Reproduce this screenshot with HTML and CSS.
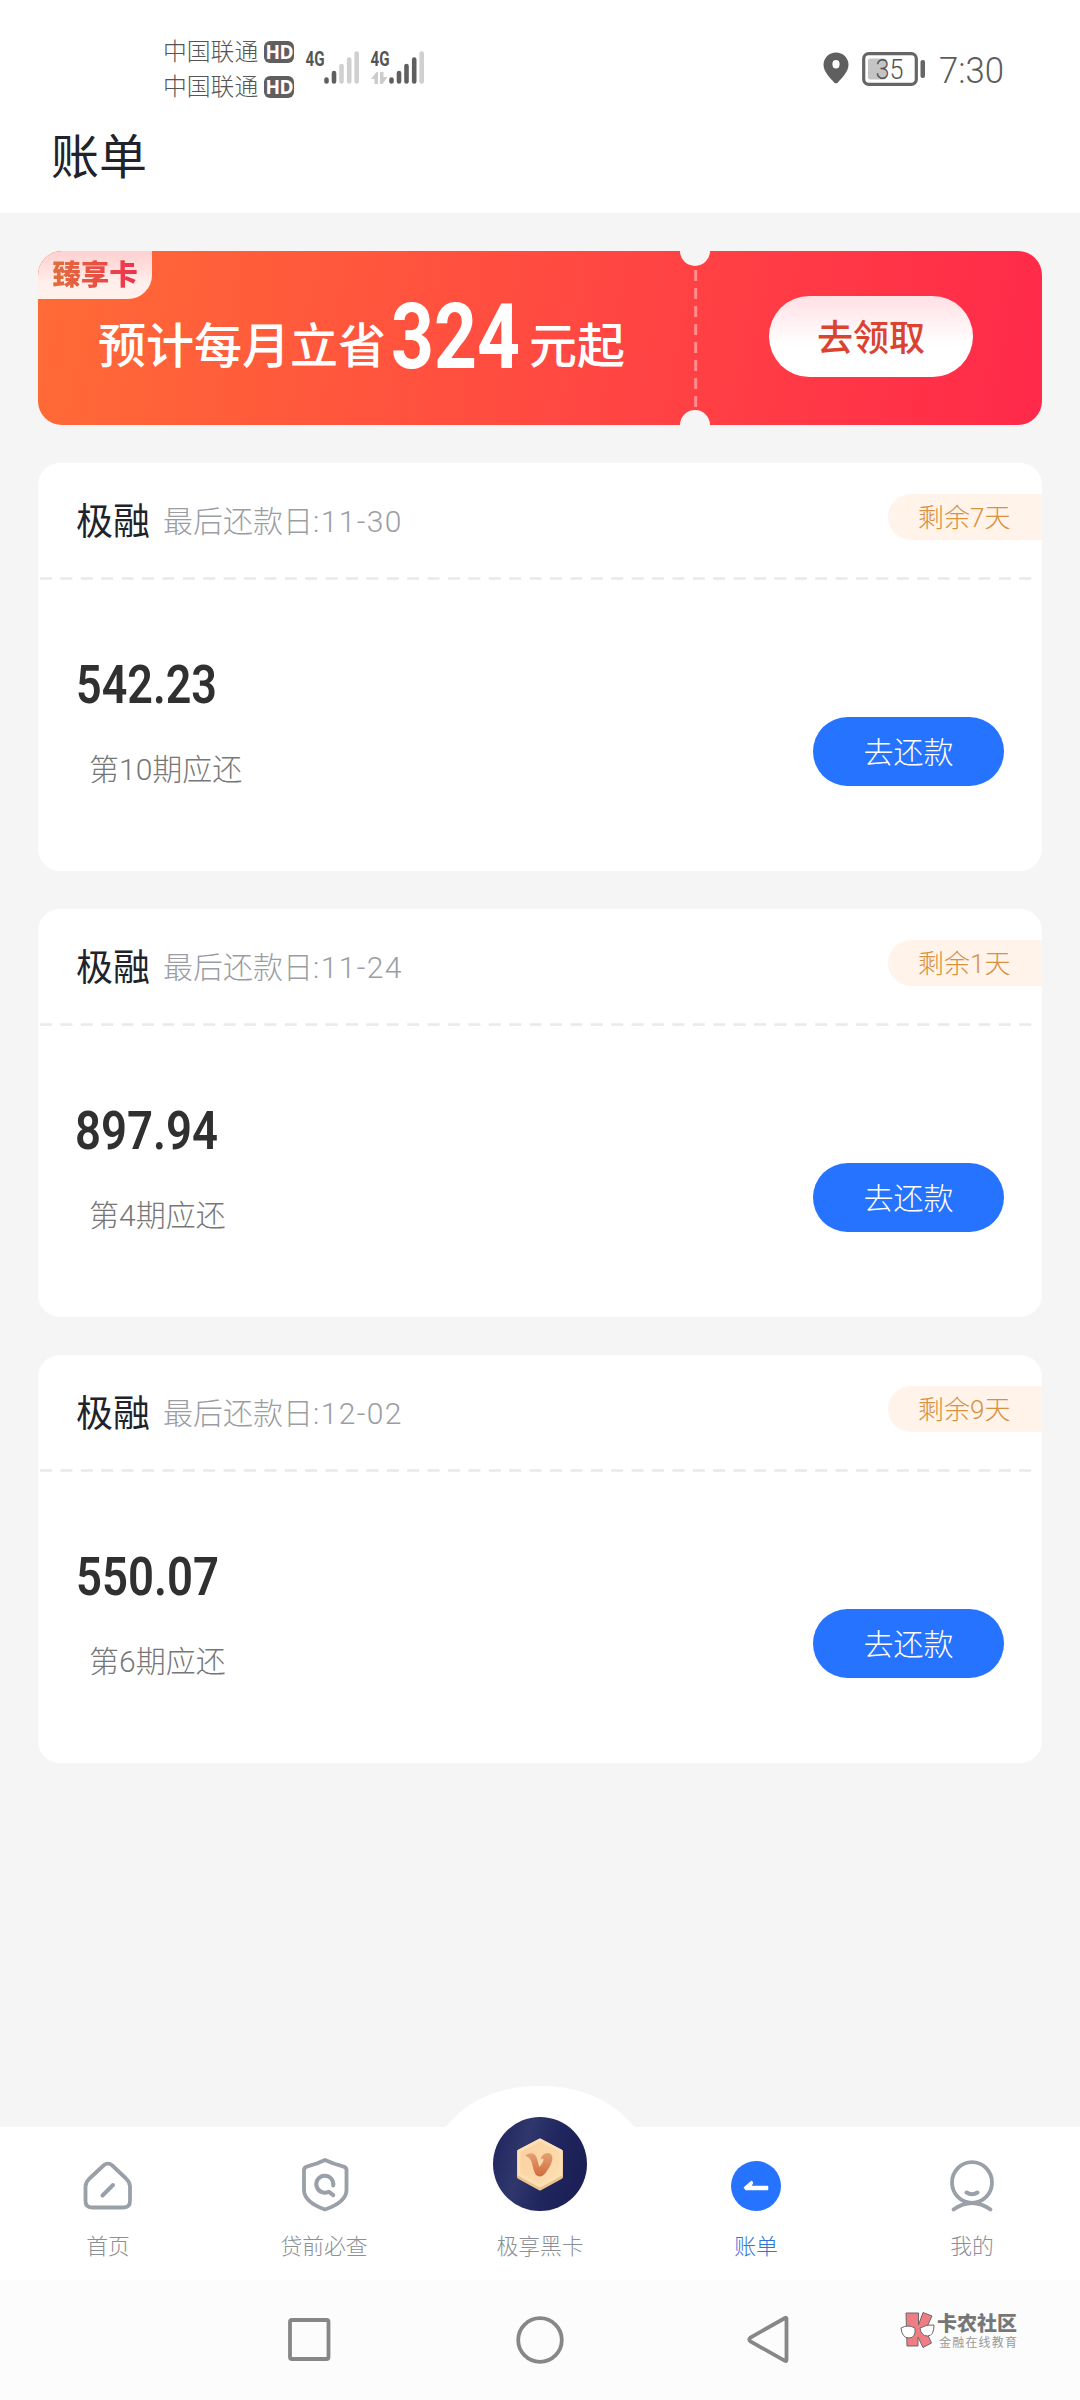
FILE: index.html
```html
<!DOCTYPE html>
<html lang="zh-CN">
<head>
<meta charset="utf-8">
<title>账单</title>
<link rel="stylesheet" href="styles.css">
</head>
<body>
<div class="screen">
  <header class="header">
    <div class="status">
      <div class="carriers">
        <div class="carrier"><span>中国联通</span><b class="hd">HD</b></div>
        <div class="carrier"><span>中国联通</span><b class="hd">HD</b></div>
      </div>
      <svg class="signals" width="120" height="40" viewBox="304 48 120 40">
        <g class="net-label"><text x="305.500" y="66" textLength="19" lengthAdjust="spacingAndGlyphs">4G</text><text x="370.500" y="66" textLength="19" lengthAdjust="spacingAndGlyphs">4G</text></g>
        <g class="bars">
          <path class="on" d="M326.500 79.500v2M334 73v8.500"/>
          <path class="off" d="M341.500 66v15.500M349.200 59.500v22M356.700 53.500v28"/>
          <path class="on" d="M391.500 79.500v2M399 73v8.500M406.500 66v15.500M414.200 59.500v22"/>
          <path class="off" d="M421.700 53.500v28"/>
        </g>
        <path fill="#ccc" d="M371 79l5.500-7h1.500v12h-3.500v-5zM380 72h3.500v5h4l-5 7H380z"/>
      </svg>
      <div class="status-right">
        <svg width="26" height="32" viewBox="0 0 26 32"><path fill="#5f5f5f" fill-rule="evenodd" d="M13 0.500C6 .500.500 6 .500 12.700c0 7 7 13.600 10.700 17.700q1.800 1.800 3.600 0C18.500 26.300 25.500 19.700 25.500 12.700 25.500 6 20 .500 13 .500zM13 8a3.600 4.200 0 1 0 0 8.400A3.600 4.200 0 1 0 13 8z"/></svg>
        <svg class="battery" width="64" height="34" viewBox="0 0 64 34"><rect x="1.700" y="1.700" width="52.600" height="30.600" rx="5" fill="none" stroke="#666" stroke-width="3.200"/><rect x="6" y="6.500" width="18" height="21" rx="2" fill="#c4c4c4"/><rect x="58.500" y="8" width="4.500" height="18" rx="2" fill="#666"/><text x="13.500" y="27" textLength="28" lengthAdjust="spacingAndGlyphs">35</text></svg>
        <svg class="clock" width="66" height="44" viewBox="0 0 66 44"><text x="0" y="31" textLength="65" lengthAdjust="spacingAndGlyphs">7:30</text></svg>
      </div>
    </div>
    <h1 class="title">账单</h1>
  </header>

  <main class="content">
    <section class="banner">
      <div class="banner-tag"><span>臻享卡</span></div>
      <div class="banner-main">
        <span>预计每月立省</span>
        <svg class="saving" width="130" height="112" viewBox="0 -20 130 112"><text x="0" y="67" textLength="129" lengthAdjust="spacingAndGlyphs">324</text></svg>
        <span>元起</span>
      </div>
      <svg class="perforation" width="30" height="174" viewBox="0 0 30 174"><circle cx="15" cy="0" r="15" fill="#f5f5f5"/><circle cx="15" cy="174" r="15" fill="#f5f5f5"/><path d="M15.700 19V156" stroke="#fff" stroke-opacity=".4" stroke-width="3" stroke-dasharray="11 7"/></svg>
      <div class="banner-side"><button class="claim">去领取</button></div>
    </section>

    <section class="card">
      <div class="card-head"><h2>极融</h2><span class="due">最后还款日<span class="date">:11-30</span></span><span class="remain">剩余7天</span></div>
      <svg class="dash" width="1004" height="3"><path d="M2 1.500H1001"/></svg>
      <div class="card-body">
        <div class="bill"><svg class="amount" width="144" height="68" viewBox="0 -12 144 68"><text x="0" y="40" textLength="141" lengthAdjust="spacingAndGlyphs">542.23</text></svg><span class="term">第10期应还</span></div>
        <button class="pay">去还款</button>
      </div>
    </section>

    <section class="card">
      <div class="card-head"><h2>极融</h2><span class="due">最后还款日<span class="date">:11-24</span></span><span class="remain">剩余1天</span></div>
      <svg class="dash" width="1004" height="3"><path d="M2 1.500H1001"/></svg>
      <div class="card-body">
        <div class="bill"><svg class="amount" width="144" height="68" viewBox="0 -12 144 68"><text x="-1" y="40" textLength="143" lengthAdjust="spacingAndGlyphs">897.94</text></svg><span class="term">第4期应还</span></div>
        <button class="pay">去还款</button>
      </div>
    </section>

    <section class="card">
      <div class="card-head"><h2>极融</h2><span class="due">最后还款日<span class="date">:12-02</span></span><span class="remain">剩余9天</span></div>
      <svg class="dash" width="1004" height="3"><path d="M2 1.500H1001"/></svg>
      <div class="card-body">
        <div class="bill"><svg class="amount" width="144" height="68" viewBox="0 -12 144 68"><text x="0" y="40" textLength="143" lengthAdjust="spacingAndGlyphs">550.07</text></svg><span class="term">第6期应还</span></div>
        <button class="pay">去还款</button>
      </div>
    </section>
  </main>

  <nav class="tabs">
    <svg class="bump" width="190" height="43" viewBox="0 0 190 43"><path fill="#fff" d="M0 43V42Q3 40 6 36C26 14 56 1 95 1S164 14 184 36Q187 40 190 42V43z"/></svg>
    <a class="tab"><svg width="60" height="60" viewBox="78 2156 60 60" class="line"><path d="M103.500 2165.500q4.400-3.800 8.800 0L126 2178.500q4 4 4 8V2201q0 6.500-6.500 6.500H92q-6.500 0-6.500-6.500v-14.500q0-4 4-8z"/><path d="M102.500 2195.500L113 2185" stroke-width="4"/></svg><span>首页</span></a>
    <a class="tab"><svg width="60" height="60" viewBox="294 2156 60 60" class="line"><path d="M325 2160Q333.500 2164 343 2166.300Q346.500 2167 346.500 2170V2190Q346.500 2202 325 2209.500Q304 2202 304 2190V2170Q304 2167 307.500 2166.300Q317 2164 325 2160z"/><path stroke-width="4" d="M333.200 2185.500a8.500 8.500 0 1 0-4.500 6.200l4.500 3.500"/></svg><span>贷前必查</span></a>
    <a class="tab center"><svg width="94" height="94" viewBox="0 0 94 94">
      <defs>
        <linearGradient id="night" x2="1" y2=".3"><stop offset="0" stop-color="#1e245c"/><stop offset=".4" stop-color="#30376c"/><stop offset=".7" stop-color="#20265e"/><stop offset="1" stop-color="#1b2056"/></linearGradient>
        <linearGradient id="gold" x2="1" y2="1"><stop stop-color="#fbd0a0"/><stop offset="1" stop-color="#fbe0b1"/></linearGradient>
        <linearGradient id="copper" x2="0" y2="1"><stop stop-color="#e6a174"/><stop offset="1" stop-color="#cf6c3c"/></linearGradient>
      </defs>
      <circle cx="47" cy="47" r="47" fill="url(#night)"/>
      <path fill="#eac28c" stroke="#eac28c" stroke-width="4" stroke-linejoin="round" d="M47 23.500L68 34.500V60L47 71.500L26 60V34.500z"/>
      <path fill="url(#gold)" stroke="#fde0b5" stroke-width="3" stroke-linejoin="round" d="M47 23L68 34V57.500L47 69L26 57.500V34z"/>
      <path fill="url(#copper)" d="M32 39q4-4 9-2c3.500 2 3.500 8 5.500 13 2-3 4-5 4-7.500 0-1.500-1.500-1-3 0 1-4 4-7 8-6.500 6 1 4 9 1 14-3 5-6 9.500-9.500 9.500-4.500 0-6-4.500-7.500-11-1-5-3-9-7.500-9.500z"/>
    </svg><span>极享黑卡</span></a>
    <a class="tab active"><svg width="60" height="60" viewBox="726 2156 60 60"><circle cx="756" cy="2186" r="25" fill="#2673ff"/><path fill="#fff" stroke="#fff" stroke-width="1.500" stroke-linejoin="round" d="M744.500 2187.500L751.500 2181.500L752.500 2183L750.500 2186.500H767.500V2189.500H746Z"/></svg><span>账单</span></a>
    <a class="tab"><svg width="60" height="60" viewBox="942 2156 60 60" class="line"><ellipse cx="972" cy="2182.500" rx="20" ry="20.300"/><path d="M966.500 2192.500q5.500 3.500 11 0" stroke-width="4"/><path d="M953.500 2209.500q18.500-13 37 0"/></svg><span>我的</span></a>
  </nav>

  <footer class="system-nav">
    <svg width="48" height="50" viewBox="0 0 48 50"><rect x="5" y="5" width="38.500" height="39" rx="2"/></svg>
    <svg width="50" height="50" viewBox="0 0 50 50"><circle cx="25" cy="25" r="21.800"/></svg>
    <svg width="48" height="50" viewBox="0 0 48 50"><path d="M41.500 3.800V45q0 1.500-1.500.800L5.500 26.500q-2.500-2 0-4L40 3q1.500-.700 1.500.800z"/></svg>
    <div class="mark">
      <svg width="36" height="38" viewBox="0 0 36 38"><g fill="#ee7d84" stroke="#70666a" stroke-width="1"><path d="M6 2H18.500V14L23 1.500 32 5 25.500 19 31.500 32 23 36.500 18 26V35H7z"/></g><g fill="#fff" stroke="#70666a"><path d="M1 17q7-4 14 0 1 10-6 10T1 17zM20 17q7-4 14-3 0 11-6.500 11T20 17z"/></g></svg>
      <div class="mark-text"><b>卡农社区</b><span>金融在线教育</span></div>
    </div>
  </footer>
</div>
</body>
</html>
```
FILE: styles.css
```css
* { box-sizing: border-box; }
body {
  margin: 0;
  background: #f5f5f5;
  font-family: Roboto, "Noto Sans CJK SC", sans-serif;
  font-weight: 300;
}
h1, h2 { margin: 0; }
button { border: 0; padding: 0; font-family: inherit; }
svg { display: block; flex: none; overflow: visible; }
.screen { width: 1080px; height: 2400px; display: flex; flex-direction: column; }

.header { height: 213px; background: #fff; }
.status { height: 129px; padding: 34px 75px 0 163px; display: flex; align-items: flex-start; }
.carriers { display: flex; flex-direction: column; }
.carrier { height: 35px; display: flex; align-items: center; gap: 6px; font-size: 23.800px; line-height: 35px; color: #555; }
.carrier span { padding-top: 2px; }
.hd { width: 30px; height: 22px; border-radius: 6px; background: #5f5f5f; color: #fff; font: 700 19px/22px "Open Sans", sans-serif; text-align: center; letter-spacing: -.500px; }
.signals { margin: 14px 0 0 10px; }
.net-label { font: 700 21px Roboto, sans-serif; fill: #555; }
.bars { stroke-width: 4.600px; stroke-linecap: round; }
.on { stroke: #5f5f5f; }
.off { stroke: #d0d0d0; }
.status-right { margin-left: auto; padding-top: 18px; display: flex; gap: 13px; }
.battery text { font: 300 27px Roboto, sans-serif; fill: #555; }
.clock text { font: 300 37px Roboto, sans-serif; fill: #5c5c5c; }
.title { padding-left: 51px; font-size: 48px; line-height: 58px; font-weight: 400; color: #20232b; }

.content { flex: 1; padding: 38px 38px 0; }
.banner { height: 174px; display: flex; border-radius: 24px; overflow: hidden; position: relative; background: linear-gradient(100deg, #ff6b36, #ff4742 55%, #ff294a); color: #fff; }
.banner-tag { position: absolute; left: 0; top: 0; width: 114px; height: 48px; border-radius: 24px 0 24px 0; background: linear-gradient(#ffd0d0, #fff0ec 70%); text-align: center; }
.banner-tag span { font-size: 28.500px; font-weight: 900; line-height: 49px; background: linear-gradient(90deg, #e0703a, #f0304e); -webkit-background-clip: text; background-clip: text; color: transparent; }
.banner-main { width: 642px; padding: 30px 0 0 60px; display: flex; font-size: 48px; line-height: 132px; font-weight: 500; white-space: nowrap; }
.saving { margin: 0 8px 0 5px; }
.saving text { font: 700 91px Roboto, sans-serif; fill: #fff; }
.banner-side { flex: 1; padding: 45px 0 0 59px; }
.claim { width: 204px; height: 81px; padding-top: 5px; border-radius: 41px; background: linear-gradient(#ffe0e5, #fff 60%); color: #d9432f; font-size: 36px; font-weight: 500; line-height: 76px; }

.card { height: 408px; margin-top: 38px; border-radius: 22px; overflow: hidden; background: #fff; }
.card-head { height: 114px; padding-left: 38px; display: flex; align-items: flex-start; }
.card-head h2 { margin-top: 33px; font-size: 37px; line-height: 54px; font-weight: 400; color: #20232b; }
.due { margin: 32px 0 0 13px; font-size: 30px; line-height: 54px; color: #9a9da4; }
.date { letter-spacing: 1.400px; }
.remain { margin: 31px 0 0 auto; width: 154px; height: 46px; padding-left: 30px; border-radius: 23px 0 0 23px; background: #fff3ea; color: #d8913f; font-size: 26px; line-height: 49px; }
.dash { fill: none; stroke: #e9e9e9; stroke-width: 2.500px; stroke-dasharray: 12px 8.400px; }
.card-body { display: flex; padding: 71px 38px 0; justify-content: space-between; }
.bill { display: flex; flex-direction: column; }
.amount text { font: 600 54px Roboto, sans-serif; fill: #303030; }
.term { margin: 29px 0 0 13px; font-size: 30px; line-height: 44px; color: #777; }
.pay { margin-top: 66px; width: 191px; height: 69px; padding-top: 2px; border-radius: 35px; background: #2673ff; color: #fff; font-size: 30px; font-weight: 300; line-height: 67px; }

.tabs { height: 153px; background: #fff; display: grid; grid-template-columns: repeat(5, 1fr); position: relative; }
.bump { position: absolute; left: 445px; top: -42px; }
.tab { display: flex; flex-direction: column; align-items: center; padding-top: 29px; font-size: 21.800px; line-height: 32px; color: #8b8f96; }
.tab span { margin-top: 15px; }
.tab.center { padding: 0; margin-top: -10px; z-index: 1; }
.tab.center span { margin-top: 20px; }
.tab.active { color: #2f74d6; }
.line { fill: none; stroke: #9aa0a8; stroke-width: 3.800px; stroke-linecap: round; stroke-linejoin: round; }
.system-nav { height: 120px; background: #fcfcfc; padding: 35px 60px 0 285px; display: flex; }
.system-nav > svg { fill: none; stroke: #878787; stroke-width: 3.800px; margin-right: 182px; }
.system-nav > svg:nth-of-type(2) { margin-right: 180px; }
.system-nav > svg:nth-of-type(3) { margin-right: 107px; }
.mark { display: flex; gap: 1px; margin-top: -4px; white-space: nowrap; }
.mark-text { display: flex; flex-direction: column; color: #777; }
.mark-text b { font-size: 20px; font-weight: 900; line-height: 26px; }
.mark-text span { font-size: 12px; font-weight: 400; line-height: 12px; letter-spacing: 1.200px; padding-left: 2px; color: #999; }
```
